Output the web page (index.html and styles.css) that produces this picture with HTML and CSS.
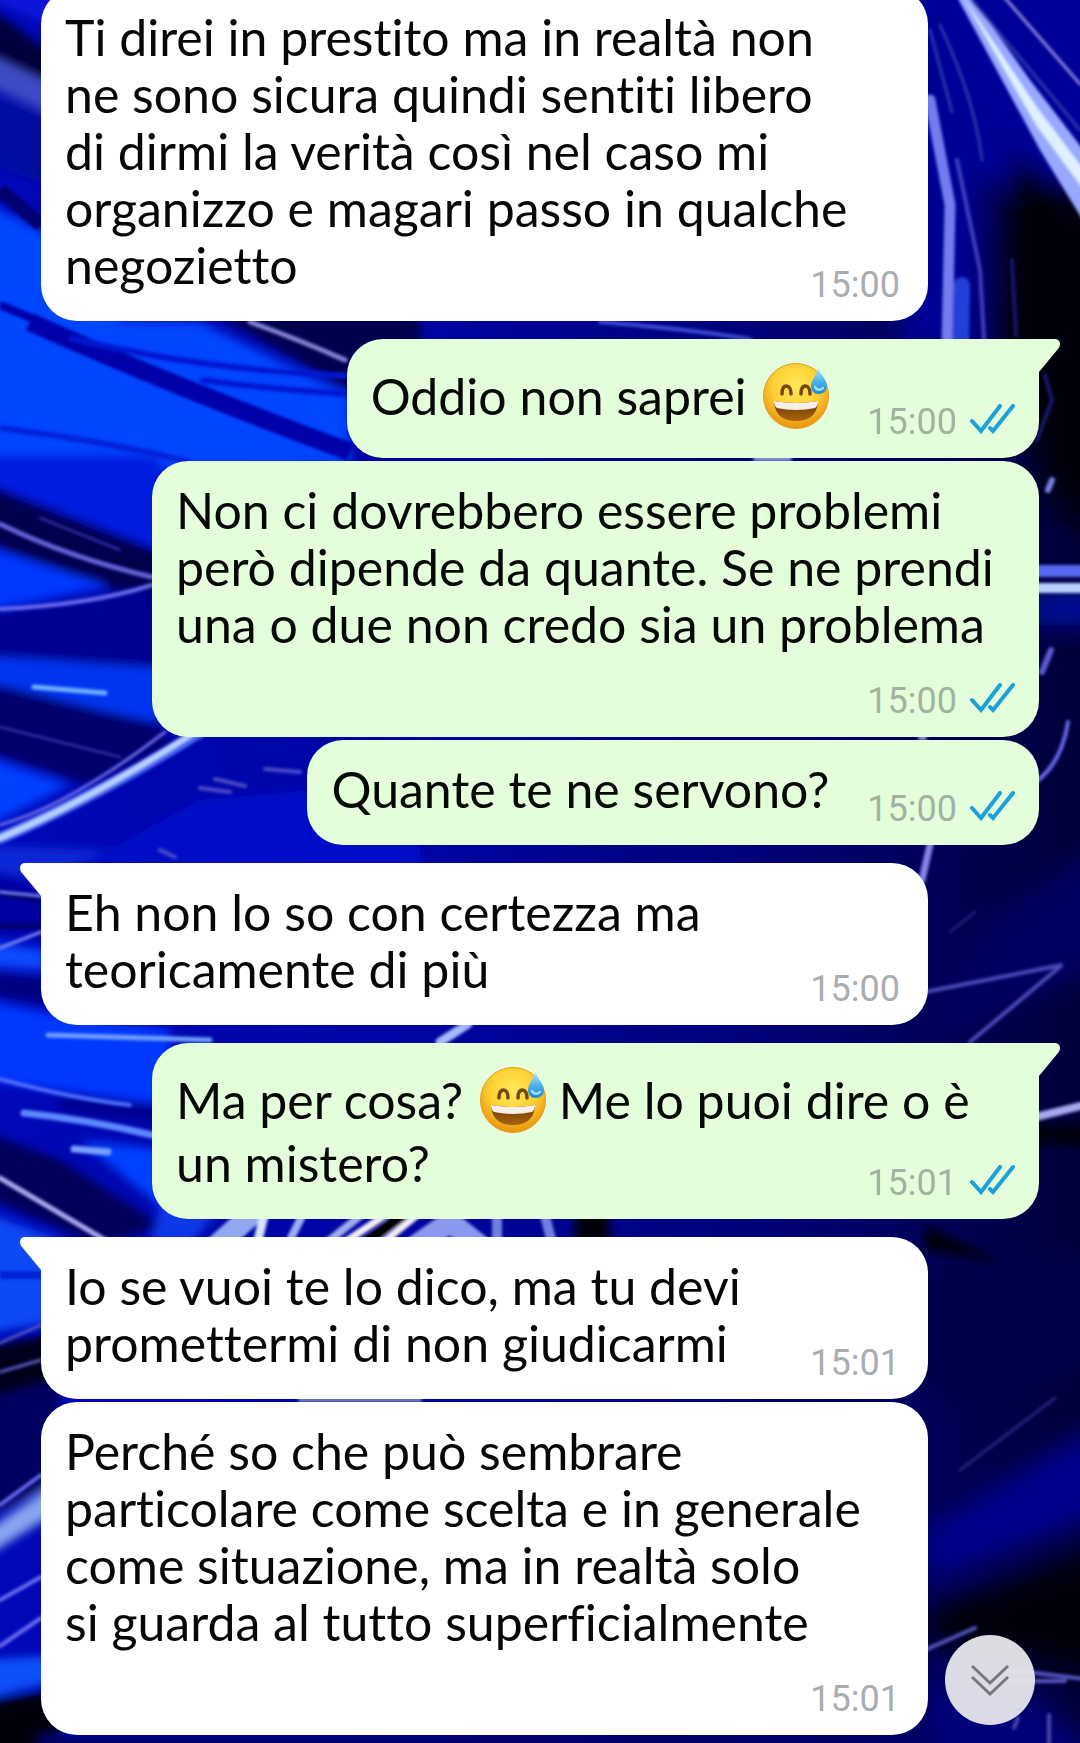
FILE: index.html
```html
<!DOCTYPE html>
<html lang="it">
<head>
  <meta charset="UTF-8">
  <meta name="viewport" content="width=device-width, initial-scale=1.0">
  <title>Chat</title>
  <link rel="stylesheet" href="styles.css">
</head>
<body>
  <!-- wallpaper -->
  <svg class="wallpaper" viewBox="0 0 1080 1743" preserveAspectRatio="xMidYMid slice" aria-hidden="true">
    <defs>
      <linearGradient id="base" x1="0" x2="1" y1="0" y2="0">
        <stop offset="0" stop-color="#0008b8"/>
        <stop offset=".4" stop-color="#0004a0"/>
        <stop offset=".75" stop-color="#000070"/>
        <stop offset="1" stop-color="#00003a"/>
      </linearGradient>
      <filter id="wide" x="-20%" y="-20%" width="140%" height="140%"><feGaussianBlur stdDeviation="12"/></filter>
      <filter id="soft" x="-20%" y="-20%" width="140%" height="140%"><feGaussianBlur stdDeviation="5"/></filter>
      <filter id="fine" x="-20%" y="-20%" width="140%" height="140%"><feGaussianBlur stdDeviation="1.500"/></filter>
    </defs>
    <rect width="1080" height="1743" fill="url(#base)"/>
    <!-- right side -->
    <g filter="url(#wide)">
      <path d="M900-40H1120V170L1000 190L925 120z" fill="#000098"/>
      <path d="M1010 150L1120 230V560L1050 500L1000 340z" fill="#00000c"/>
      <path d="M900 110H980V350H900z" fill="#000094"/>
      <path d="M1030 595L1120 590V625H1030z" fill="#0008a0"/>
      <path d="M930 1040L1120 960V830L990 920z" fill="#000060"/>
      <path d="M925 1270L1120 1250V1360L925 1400z" fill="#00004c"/>
      <path d="M925 1530L1120 1410V1510L925 1580z" fill="#00008c"/>
      <path d="M925 1610L1120 1540V1680L980 1650L925 1640z" fill="#000008"/>
      <path d="M925 1680L1040 1700L1120 1780H925z" fill="#000078"/>
    </g>
    <!-- large areas -->
    <g filter="url(#soft)">
      <path d="M-20-20H60V30L-20-5z" fill="#0818d8"/>
      <path d="M-20 0L60 60V90L-20 50z" fill="#00003c"/>
      <path d="M-20 50L60 88V118L-20 82z" fill="#3c4cc4"/>
      <path d="M-20 90L60 120V190L-20 160z" fill="#0008a0"/>
      <path d="M-20 200L60 240L120 320L200 322L350 395V465L150 470L-20 460z" fill="#0044ff"/>
      <path d="M200 305L420 300V430z" fill="#000050"/>
      <path d="M-20 455H160V550L-20 480z" fill="#001ce0"/>
      <path d="M-20 482L160 552V590H110L-20 540z" fill="#000050"/>
      <path d="M-20 545L110 586L-20 612z" fill="#0038ff"/>
      <path d="M-20 615L160 590V668L-20 655z" fill="#000090"/>
      <path d="M-20 656L160 668V722L-20 690z" fill="#0034f0"/>
      <path d="M-20 680L160 725L170 745L90 785L-20 750z" fill="#00006c"/>
      <path d="M-20 755L70 785L-20 830z" fill="#0040ff"/>
      <path d="M90 860L200 800L420 780V880z" fill="#000cc8"/>
      <path d="M-20 845L110 850L45 880L-20 870z" fill="#0828d8"/>
      <path d="M-20 870L45 890V935L-20 930z" fill="#0000a0"/>
      <path d="M-20 940L45 950V970L-20 965z" fill="#1048ff"/>
      <path d="M-20 970L60 980V1005L-20 995z" fill="#000080"/>
      <path d="M-20 1000L60 1015L170 1030V1105L-20 1080z" fill="#0038ff"/>
      <path d="M60 1096L160 1106V1122L60 1112z" fill="#000090"/>
      <path d="M80 1140L170 1150V1215z" fill="#0040ff"/>
      <path d="M160 1205L215 1215L190 1245H150z" fill="#0838e8"/>
      <path d="M-20 1130L60 1160L160 1225L100 1245L-20 1195z" fill="#000058"/>
      <path d="M-20 1210L60 1240V1320L-20 1335z" fill="#0c48f4"/>
      <path d="M-20 1348L60 1332V1380L-20 1400z" fill="#00001c"/>
      <path d="M-20 1400L60 1380V1480L-20 1520z" fill="#000060"/>
      <path d="M-20 1535L60 1480V1510L-20 1560z" fill="#88a4f0"/>
      <path d="M-20 1660L60 1655V1680L-20 1700z" fill="#0c50f8"/>
      <path d="M-20 1700L60 1690V1770H-20z" fill="#000010"/>
      <path d="M40 1735H930V1760H40z" fill="#000068"/>
      <path d="M1035 1125H1100V1145H1035z" fill="#00000c"/>
      <path d="M925 1225L1000 1262L925 1250z" fill="#000008"/>
      <path d="M575 1205H610V1260H575z" fill="#000008"/>
    </g>
    <!-- dark folds -->
    <g filter="url(#fine)" fill="none" stroke="#0000a8">
      <path d="M30 322Q170 385 350 452" stroke-width="18"/>
      <path d="M70 338Q200 370 350 376" stroke="#0018d0" stroke-width="6"/>
      <path d="M200 380Q280 390 350 394" stroke="#0018d0" stroke-width="6"/>
      <path d="M0 428Q100 440 190 462" stroke="#0020d8" stroke-width="6"/>
      <path d="M0 190L41 225" stroke="#000070" stroke-width="14"/>
      <path d="M0 305L60 330" stroke-width="8"/>
      <path d="M0 1275H41" stroke="#0020d0" stroke-width="8"/>
      <path d="M0 893L41 900M0 926H41" stroke="#000070" stroke-width="6"/>
    </g>
    <!-- highlights -->
    <g filter="url(#fine)" fill="none" stroke-linecap="round" stroke="#6c6cf0" stroke-width="2">
      <path d="M250 322Q300 340 345 360" stroke="#8484d8" stroke-width="5"/>
      <path d="M0 524Q70 558 152 577" stroke="#6464d8" stroke-width="5"/>
      <path d="M40 518L120 550" stroke="#3434b8"/>
      <path d="M0 609Q90 605 152 585" stroke-width="4"/>
      <path d="M34 687L105 693" stroke="#70b0ff" stroke-width="5"/>
      <path d="M0 727L120 757" stroke="#3838b0"/>
      <path d="M0 825Q70 805 165 732" stroke-width="3"/>
      <path d="M0 838Q90 800 200 732" stroke="#4868f0" stroke-width="12"/>
      <path d="M0 838Q90 800 195 732" stroke="#b8d0ff" stroke-width="6"/>
      <path d="M200 788L230 792M215 779L245 786M265 769L300 772M160 850L175 857" stroke="#4c4cc8" stroke-width="4"/>
      <path d="M0 892L41 896M0 948L41 932" stroke="#7c84f4" stroke-width="3"/>
      <path d="M48 1035L210 1040" stroke="#70a0ff" stroke-width="5"/>
      <path d="M440 1042L468 1024" stroke="#a8b8ff" stroke-width="9"/>
      <path d="M0 1079Q70 1098 130 1105" stroke="#5070ff" stroke-width="4"/>
      <path d="M24 1113Q90 1120 152 1135" stroke="#5c88ff" stroke-width="7"/>
      <path d="M74 1149L108 1152" stroke="#78a0ff" stroke-width="7"/>
      <path d="M0 1178L105 1240" stroke="#a8a8f0" stroke-width="5"/>
      <path d="M0 1343L41 1325M0 1372L41 1360" stroke="#5858c0" stroke-width="3"/>
      <path d="M0 1505L41 1475M0 1600L41 1577M0 1646L41 1618" stroke-width="4"/>
      <path d="M956-5L970-5L1030 80L1095 165V240L1040 150z" fill="#98a8ff" stroke="none"/>
      <path d="M962-5L1036 106L1095 185V205L1036 125z" fill="#e0f0ff" stroke="none"/>
      <path d="M1005-2L1080 84" stroke="#8884d8" stroke-width="3"/>
      <path d="M972 0L1080 130M930 30L952 112M940 25Q975 100 982 160" stroke="#2c34a8" stroke-width="3"/>
      <path d="M930 100L950 205L947 345" stroke="#747cf0" stroke-width="11" stroke-linejoin="round"/>
      <path d="M962 285L961 345" stroke="#2440d8" stroke-width="16"/>
      <path d="M957 160L980 270L984 340" stroke="#4040c0" stroke-width="4"/>
      <path d="M1012 260L1016 335M1045 375L1052 400L1037 440" stroke="#181868" stroke-width="4"/>
      <path d="M1052 480L1048 490" stroke="#7880e0" stroke-width="6"/>
      <path d="M1030 571H1090" stroke="#5868f0" stroke-width="12"/>
      <path d="M1030 588H1090" stroke="#b8d0ff" stroke-width="10"/>
      <path d="M1051 650L1042 672" stroke="#5c5cd0" stroke-width="6"/>
      <path d="M1068 722Q1062 762 1036 782" stroke-width="4"/>
      <path d="M931 840L922 880" stroke="#8484e8" stroke-width="7"/>
      <path d="M950 932L975 912" stroke="#1c1c78" stroke-width="3"/>
      <path d="M925 992L1062 965L970 1042" stroke="#4c4cb8" stroke-width="4"/>
      <path d="M1036 1117L1085 1105" stroke="#a8a8f0" stroke-width="8"/>
      <path d="M960 1470L1055 1398" stroke="#202078" stroke-width="3"/>
      <path d="M925 1650L975 1628M1010 1670L1085 1679M1010 1681H1065" stroke="#5454c0" stroke-width="4"/>
      <path d="M1014 1728L1018 1718M1049 1715V1743" stroke="#4848a8" stroke-width="4"/>
      <!-- strip between the lower bubbles -->
      <path d="M214 1248L250 1216" stroke="#90a8f0" stroke-width="22"/>
      <path d="M256 1248L264 1216" stroke="#d8e4ff" stroke-width="9"/>
      <path d="M286 1248L302 1216M320 1248L360 1216" stroke="#a0acf0" stroke-width="8"/>
      <path d="M336 1248L384 1216M376 1248L416 1216" stroke="#f4f0f0" stroke-width="7"/>
      <path d="M358 1248L402 1216" stroke="#000" stroke-width="10"/>
      <path d="M410 1250L450 1222L485 1250" stroke="#8c98f0" stroke-width="22"/>
      <path d="M497 1216V1250M545 1216L554 1250" stroke="#7080e0" stroke-width="10"/>
      <path d="M300 1400H420" stroke="#8088c0" stroke-width="4"/>
      <path d="M755 459H790M920 738H925" stroke="#a0a8e8" stroke-width="4"/>
      <path d="M600 322Q680 328 750 339" stroke="#3c4cd8" stroke-width="4"/>
    </g>
  </svg>

  <svg class="defs" width="0" height="0" aria-hidden="true">
    <defs>
      <radialGradient id="face" cx=".5" cy=".35" r=".65">
        <stop offset="0" stop-color="#ffe95c"/>
        <stop offset=".55" stop-color="#fdd033"/>
        <stop offset="1" stop-color="#e8930c"/>
      </radialGradient>
      <linearGradient id="drop" x1="0" x2="0" y1="0" y2="1">
        <stop offset="0" stop-color="#b4e6fa"/>
        <stop offset=".5" stop-color="#4db4ea"/>
        <stop offset="1" stop-color="#1e86cf"/>
      </linearGradient>
      <linearGradient id="mouth" x1="0" x2="0" y1="0" y2="1">
        <stop offset="0" stop-color="#6b3a06"/>
        <stop offset="1" stop-color="#a8640c"/>
      </linearGradient>
      <symbol id="sweat" viewBox="0 0 66 66">
        <circle cx="33" cy="33" r="32.500" fill="url(#face)" stroke="#e59a24" stroke-width="1"/>
        <path d="M19 31C19 25 21 23 23.500 23S28 26 28 31M38 31C38 25 40 23 42.500 23S47 26 47 31" fill="none" stroke="#7a4506" stroke-width="3.500" stroke-linecap="round"/>
        <path d="M11 38Q33 42 55 38Q54 58 33 58T11 38z" fill="url(#mouth)"/>
        <path d="M11 38Q33 42 55 38Q55 43 52 45Q33 49 14 45Q11 43 11 38z" fill="#f5efe8"/>
        <path d="M55.500 5C57 12 64 16 64 23.500C64 28 60 31 55.500 31S48 28 48 23.500C48 16 54 12 55.500 5z" fill="url(#drop)"/>
        <path d="M52 24Q55 29 60 25" fill="none" stroke="#9be0fb" stroke-width="2.500" stroke-linecap="round"/>
      </symbol>
      <symbol id="read" viewBox="0 0 46 30">
        <path d="M3 17L12 27L31 2M21 24L24 27L44 2" fill="none" stroke="#1ba1dc" stroke-width="4" stroke-linejoin="miter" stroke-linecap="round"/>
      </symbol>
      <symbol id="tail" viewBox="0 0 22 34">
        <path d="M0 0H17Q21 1 21 5Q21 8 19 10L0 33z" fill="currentColor"/>
      </symbol>
    </defs>
  </svg>

  <main class="chat">
    <section class="group in">
      <article class="bubble wide">
        <p>Ti direi in prestito ma in realtà non<br>ne sono sicura quindi sentiti libero<br>di dirmi la verità così nel caso mi<br>organizzo e magari passo in qualche<br>negozietto</p>
        <div class="meta"><time>15:00</time></div>
      </article>
    </section>

    <section class="group out">
      <article class="bubble inline first">
        <svg class="tail"><use href="#tail"/></svg>
        <p>Oddio non saprei <svg class="emoji" role="img" aria-label="😅"><use href="#sweat"/></svg></p>
        <div class="meta"><time>15:00</time><svg class="ticks"><use href="#read"/></svg></div>
      </article>
      <article class="bubble wide stacked">
        <p>Non ci dovrebbero essere problemi<br>però dipende da quante. Se ne prendi<br>una o due non credo sia un problema</p>
        <div class="meta"><time>15:00</time><svg class="ticks"><use href="#read"/></svg></div>
      </article>
      <article class="bubble inline">
        <p>Quante te ne servono?</p>
        <div class="meta"><time>15:00</time><svg class="ticks"><use href="#read"/></svg></div>
      </article>
    </section>

    <section class="group in">
      <article class="bubble wide first">
        <svg class="tail"><use href="#tail"/></svg>
        <p>Eh non lo so con certezza ma<br>teoricamente di più</p>
        <div class="meta"><time>15:00</time></div>
      </article>
    </section>

    <section class="group out">
      <article class="bubble wide first">
        <svg class="tail"><use href="#tail"/></svg>
        <p>Ma per cosa? <svg class="emoji" role="img" aria-label="😅"><use href="#sweat"/></svg> Me lo puoi dire o è<br>un mistero?</p>
        <div class="meta"><time>15:01</time><svg class="ticks"><use href="#read"/></svg></div>
      </article>
    </section>

    <section class="group in">
      <article class="bubble wide first">
        <svg class="tail"><use href="#tail"/></svg>
        <p>Io se vuoi te lo dico, ma tu devi<br>promettermi di non giudicarmi</p>
        <div class="meta"><time>15:01</time></div>
      </article>
      <article class="bubble wide stacked">
        <p>Perché so che può sembrare<br>particolare come scelta e in generale<br>come situazione, ma in realtà solo<br>si guarda al tutto superficialmente</p>
        <div class="meta"><time>15:01</time></div>
      </article>
    </section>
  </main>

  <button class="scroll-down" type="button" aria-label="Vai in fondo">
    <svg width="40" height="32" viewBox="0 0 40 32"><path d="M2 2L20 19L38 2M2 13L20 30L38 13" fill="none" stroke="#77777b" stroke-width="3"/></svg>
  </button>
</body>
</html>
```
FILE: styles.css
```css
* {
  box-sizing: border-box;
}
body {
  margin: 0;
  background: #00006a;
  font-family: Lato, "Noto Sans", sans-serif;
  font-variant-ligatures: none;
  color: #050805;
  overflow-x: hidden;
}
.wallpaper {
  position: fixed;
  inset: 0;
  width: 100%;
  height: 100%;
  z-index: -1;
}
.defs {
  position: absolute;
}
.chat {
  display: flex;
  flex-direction: column;
  gap: 18px;
  margin-top: -12px;
  padding: 0 41px 8px;
}
.group {
  display: flex;
  flex-direction: column;
  gap: 3px;
}
.in {
  align-items: flex-start;
}
.out {
  align-items: flex-end;
}
.bubble {
  position: relative;
  display: grid;
  padding: 21px 24px 27px;
  border-radius: 36px;
}
.in .bubble {
  background: #fff;
  color: #fff;
}
.out .bubble {
  background: #e4fedb;
  color: #e4fedb;
}
.in .first {
  border-top-left-radius: 0;
}
.out .first {
  border-top-right-radius: 0;
}
.bubble p {
  grid-area: 1 / 1;
  margin: 0;
  font-size: 50px;
  line-height: 57px;
  color: #050805;
}
.wide {
  width: calc(100% - 111px);
}
.inline {
  grid-template-columns: auto auto;
  column-gap: 38px;
}
.meta {
  grid-area: 1 / 1;
  align-self: end;
  justify-self: end;
  display: flex;
  align-items: center;
  gap: 12px;
  height: 36px;
  margin-bottom: -9px;
  font-family: Roboto, sans-serif;
  font-size: 36px;
  line-height: 36px;
  color: #a9adb0;
}
.in .meta {
  margin-right: 4px;
}
.out .meta {
  color: #a2b2a0;
}
.inline .meta {
  grid-area: 1 / 2;
}
.stacked {
  grid-template-rows: auto 57px;
}
.stacked .meta {
  grid-area: 2 / 1;
}
.ticks {
  width: 46px;
  height: 30px;
  margin-bottom: 6px;
}
.emoji {
  width: 66px;
  height: 66px;
  margin: 3px 0 2px 4px;
  vertical-align: -16px;
}
.tail {
  position: absolute;
  top: 0;
  width: 22px;
  height: 34px;
}
.out .tail {
  left: 100%;
}
.in .tail {
  right: 100%;
  transform: scaleX(-1);
}
.scroll-down {
  position: fixed;
  right: 45px;
  bottom: 18px;
  display: grid;
  place-items: center;
  width: 90px;
  height: 90px;
  padding: 0;
  border: 0;
  border-radius: 50%;
  background: rgba(236, 236, 240, .93);
  cursor: pointer;
}
```
